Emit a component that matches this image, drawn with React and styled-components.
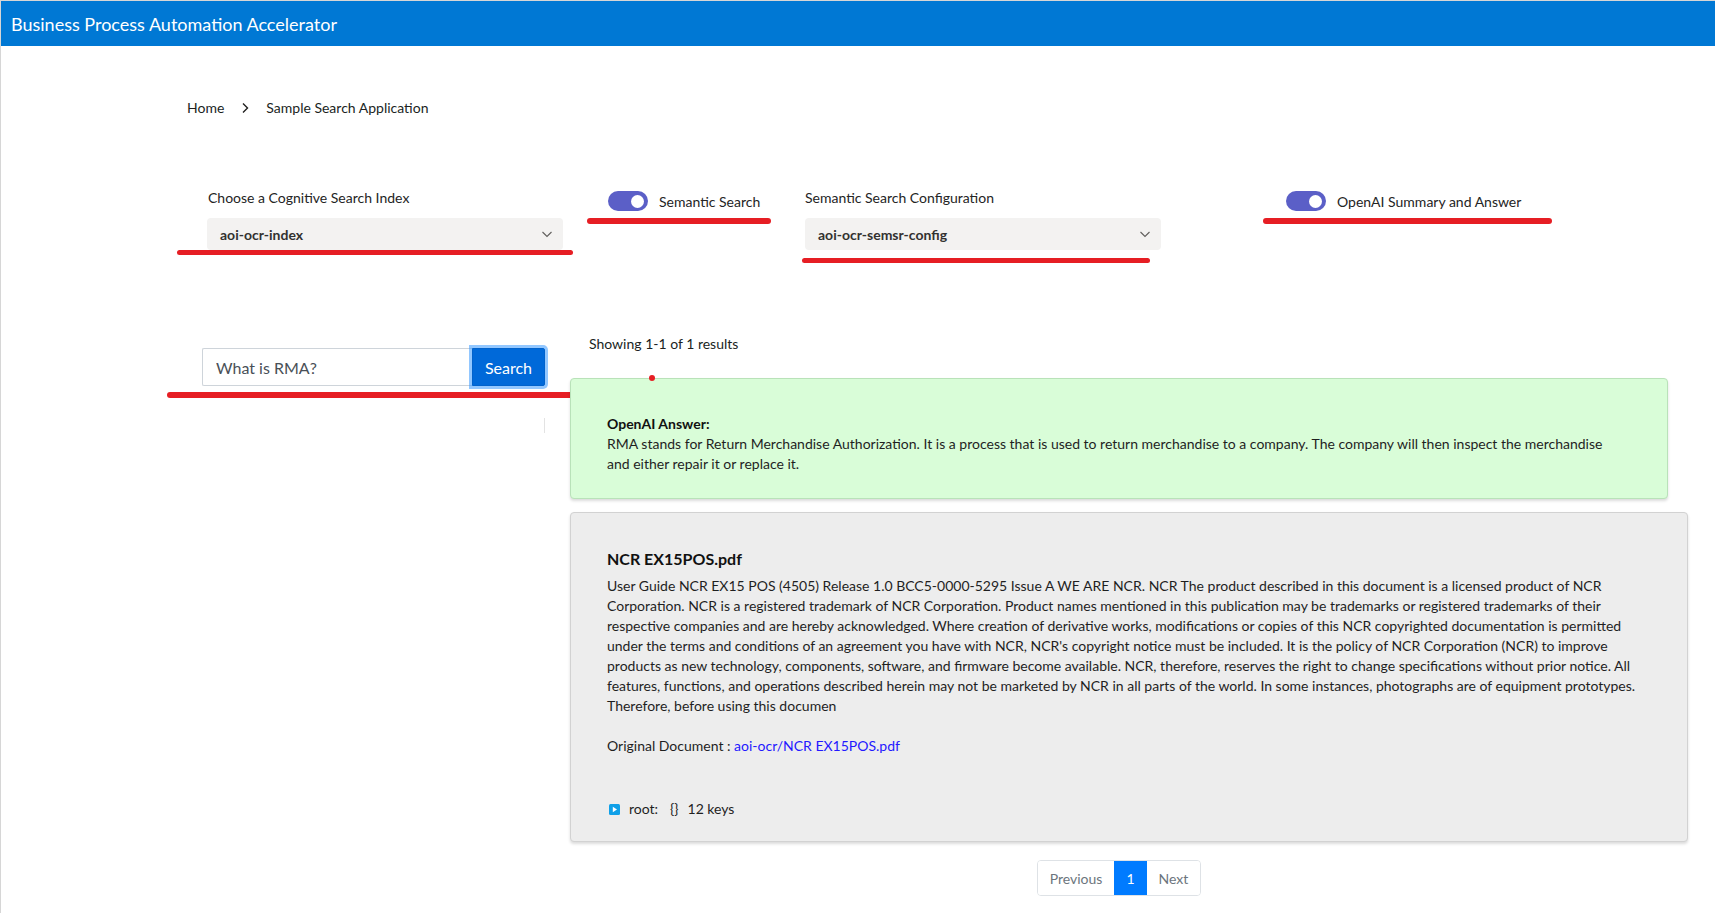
import React from "react";
import styled, { createGlobalStyle } from "styled-components";

const FONT = `"Lato", "Liberation Sans", sans-serif`;

const GlobalStyle = createGlobalStyle`
  html, body {
    margin: 0;
    padding: 0;
    background: #ffffff;
  }
  body {
    font-family: ${FONT};
    color: #201f1e;
  }
  * {
    box-sizing: border-box;
  }
`;

const Frame = styled.div`
  min-height: 913px;
  border-top: 1px solid #d6d6d6;
  border-left: 1px solid #d6d6d6;
`;

const Header = styled.header`
  height: 45px;
  background: #0078d4;
  color: #ffffff;
  display: flex;
  align-items: center;
  padding-left: 10px;
  font-size: 18px;
`;

const Main = styled.main`
  padding-top: 52px;
`;

const Breadcrumb = styled.nav`
  display: flex;
  align-items: center;
  gap: 17px;
  margin-left: 186px;
  font-size: 14px;
  line-height: 20px;
`;

const Crumb = styled.span`
  color: #201f1e;
`;

const Controls = styled.section`
  display: flex;
  align-items: flex-start;
  margin: 70px 0 0 176px;
`;

const Group = styled.div`
  display: flex;
  flex-direction: column;
  width: ${(p) => p.$w}px;
  margin-left: ${(p) => p.$ml || 0}px;
`;

const Label = styled.label`
  font-size: 14px;
  line-height: 20px;
  color: #242424;
  padding-left: ${(p) => p.$pl || 0}px;
`;

const Dropdown = styled.div`
  margin: 10px 0 0 ${(p) => p.$ml || 0}px;
  width: 356px;
  height: 32px;
  border-radius: 4px;
  background: #f3f2f1;
  display: flex;
  align-items: center;
  justify-content: space-between;
  padding: 0 10px 0 13px;
  font-size: 14px;
  font-weight: 700;
  color: #323130;
`;

const ToggleRow = styled.div`
  display: flex;
  align-items: center;
  gap: 11px;
  margin-top: 3px;
  padding-left: ${(p) => p.$pl}px;
  font-size: 14px;
  color: #242424;
`;

const Track = styled.span`
  width: 40px;
  height: 20px;
  border-radius: 10px;
  background: #5b5fc7;
  display: flex;
  align-items: center;
  justify-content: flex-end;
  padding-right: 4px;
`;

const Knob = styled.span`
  width: 13px;
  height: 13px;
  border-radius: 50%;
  background: #ffffff;
`;

const Mark = styled.div`
  height: ${(p) => p.$h || 5}px;
  width: ${(p) => p.$w}px;
  margin-top: ${(p) => p.$mt || 0}px;
  margin-left: ${(p) => p.$ml || 0}px;
  border-radius: 3px;
  background: #e61e24;
`;

const Results = styled.section`
  display: flex;
  align-items: flex-start;
  margin: 71px 0 0 165px;
`;

const SearchCol = styled.div`
  width: 404px;
  flex-shrink: 0;
  padding-top: 14px;
  display: flex;
  flex-direction: column;
`;

const SearchForm = styled.form`
  display: flex;
  margin-left: 36px;
`;

const SearchInput = styled.input`
  width: 270px;
  height: 38px;
  border: 1px solid #ced4da;
  border-right: none;
  border-radius: 2px 0 0 2px;
  padding: 0 12px 0 13px;
  font-family: ${FONT};
  font-size: 16px;
  color: #495057;
  outline: none;
`;

const SearchButton = styled.button`
  width: 73px;
  height: 38px;
  border: 1px solid #0062cc;
  border-radius: 0 2px 2px 0;
  background: #0069d9;
  color: #ffffff;
  font-family: ${FONT};
  font-size: 16px;
  box-shadow: 0 0 0 3px rgba(38, 143, 255, 0.5);
  cursor: pointer;
`;

const Divider = styled.div`
  width: 1px;
  height: 15px;
  margin: 20px 0 0 378px;
  background: #e3e3e3;
`;

const ResultsCol = styled.div`
  width: 1098px;
  display: flex;
  flex-direction: column;
`;

const Showing = styled.div`
  padding-left: 19px;
  font-size: 14px;
  line-height: 20px;
  margin-bottom: 24px;
`;

const Card = styled.article`
  position: relative;
  width: ${(p) => (p.$wide ? "calc(100% + 20px)" : "100%")};
  margin-top: ${(p) => p.$mt || 0}px;
  padding: 35px ${(p) => p.$pr}px ${(p) => p.$pb}px 36px;
  background: ${(p) => p.$bg};
  border: 1px solid ${(p) => p.$border};
  border-radius: 4px;
  box-shadow: 0 2px 3px rgba(0, 0, 0, 0.14);
  font-size: 14px;
  line-height: 20px;
  color: #1f1f1f;
`;

const RedDot = styled.span`
  position: absolute;
  left: 78px;
  top: -4px;
  width: 6px;
  height: 6px;
  border-radius: 50%;
  background: #e61e24;
`;

const AnswerTitle = styled.div`
  font-weight: 700;
  color: #111111;
`;

const DocTitle = styled.h3`
  margin: 0 0 6px;
  font-size: 16px;
  line-height: 22px;
  font-weight: 700;
  color: #111111;
`;

const Para = styled.p`
  margin: 0;
`;

const OriginLine = styled.div`
  margin-top: 20px;
`;

const DocLink = styled.a`
  color: #2418ff;
  text-decoration: none;
`;

const JsonRow = styled.div`
  display: flex;
  align-items: center;
  margin-top: 43px;
  padding-left: 2px;
  gap: 9px;
`;

const JsonKey = styled.span`
  margin-right: 3px;
`;

const Pagination = styled.nav`
  display: flex;
  margin: 18px auto 0;
  border: 1px solid #dee2e6;
  border-radius: 4px;
  overflow: hidden;
`;

const PageItem = styled.span`
  height: 34px;
  display: flex;
  align-items: center;
  padding: 0 ${(p) => p.$px}px;
  font-size: 14px;
  color: ${(p) => (p.$active ? "#ffffff" : "#6c757d")};
  background: ${(p) => (p.$active ? "#007bff" : "#ffffff")};
`;

function Chevron({ size = 12, color = "#605e5c" }) {
  return (
    <svg width={size} height={size} viewBox="0 0 12 12">
      <path d="M1.5 4 L6 8.5 L10.5 4" fill="none" stroke={color} strokeWidth="1.1" />
    </svg>
  );
}

function CrumbArrow() {
  return (
    <svg width="8" height="12" viewBox="0 0 8 12">
      <path d="M2 1.5 L6.5 6 L2 10.5" fill="none" stroke="#201f1e" strokeWidth="1.4" />
    </svg>
  );
}

function ExpandIcon() {
  return (
    <svg width="11" height="11" viewBox="0 0 11 11">
      <rect x="0" y="0" width="11" height="11" rx="1.5" fill="#10a0e8" />
      <path d="M3.8 2.8 L8 5.5 L3.8 8.2 Z" fill="#ffffff" />
    </svg>
  );
}

function Toggle({ label, pl }) {
  return (
    <ToggleRow $pl={pl}>
      <Track>
        <Knob />
      </Track>
      {label}
    </ToggleRow>
  );
}

const docText =
  "User Guide NCR EX15 POS (4505) Release 1.0 BCC5-0000-5295 Issue A WE ARE NCR. NCR The product described in this document is a licensed product of NCR Corporation. NCR is a registered trademark of NCR Corporation. Product names mentioned in this publication may be trademarks or registered trademarks of their respective companies and are hereby acknowledged. Where creation of derivative works, modifications or copies of this NCR copyrighted documentation is permitted under the terms and conditions of an agreement you have with NCR, NCR's copyright notice must be included. It is the policy of NCR Corporation (NCR) to improve products as new technology, components, software, and firmware become available. NCR, therefore, reserves the right to change specifications without prior notice. All features, functions, and operations described herein may not be marketed by NCR in all parts of the world. In some instances, photographs are of equipment prototypes. Therefore, before using this documen";

const answerText =
  "RMA stands for Return Merchandise Authorization. It is a process that is used to return merchandise to a company. The company will then inspect the merchandise and either repair it or replace it.";

export default function App() {
  return (
    <>
      <GlobalStyle />
      <Frame>
        <Header>Business Process Automation Accelerator</Header>
        <Main>
          <Breadcrumb>
            <Crumb>Home</Crumb>
            <CrumbArrow />
            <Crumb>Sample Search Application</Crumb>
          </Breadcrumb>

          <Controls>
            <Group $w={396}>
              <Label $pl={31}>Choose a Cognitive Search Index</Label>
              <Dropdown $ml={30}>
                aoi-ocr-index
                <Chevron />
              </Dropdown>
              <Mark $w={396} />
            </Group>
            <Group $w={184} $ml={14}>
              <Toggle label="Semantic Search" pl={21} />
              <Mark $w={184} $mt={7} $h={6} />
            </Group>
            <Group $w={359} $ml={31}>
              <Label $pl={3}>Semantic Search Configuration</Label>
              <Dropdown $ml={3}>
                aoi-ocr-semsr-config
                <Chevron />
              </Dropdown>
              <Mark $w={348} $mt={8} />
            </Group>
            <Group $w={289} $ml={102}>
              <Toggle label="OpenAI Summary and Answer" pl={23} />
              <Mark $w={289} $mt={7} $h={6} />
            </Group>
          </Controls>

          <Results>
            <SearchCol>
              <SearchForm onSubmit={(e) => e.preventDefault()}>
                <SearchInput defaultValue="What is RMA?" />
                <SearchButton type="submit">Search</SearchButton>
              </SearchForm>
              <Mark $w={407} $ml={1} $mt={6} $h={6} />
              <Divider />
            </SearchCol>

            <ResultsCol>
              <Showing>Showing 1-1 of 1 results</Showing>
              <Card $bg="#d9fdd8" $border="#b9e2b9" $pr={46} $pb={24}>
                <RedDot />
                <AnswerTitle>OpenAI Answer:</AnswerTitle>
                <Para>{answerText}</Para>
              </Card>
              <Card $wide $mt={13} $bg="#ededed" $border="#d2d2d2" $pr={36} $pb={22}>
                <DocTitle>NCR EX15POS.pdf</DocTitle>
                <Para>{docText}</Para>
                <OriginLine>
                  Original Document : <DocLink href="#">aoi-ocr/NCR EX15POS.pdf</DocLink>
                </OriginLine>
                <JsonRow>
                  <ExpandIcon />
                  <JsonKey>root:</JsonKey>
                  <span>{"{}"}</span>
                  <span>12 keys</span>
                </JsonRow>
              </Card>
              <Pagination>
                <PageItem $px={12}>Previous</PageItem>
                <PageItem $px={12} $active>1</PageItem>
                <PageItem $px={12}>Next</PageItem>
              </Pagination>
            </ResultsCol>
          </Results>
        </Main>
      </Frame>
    </>
  );
}
